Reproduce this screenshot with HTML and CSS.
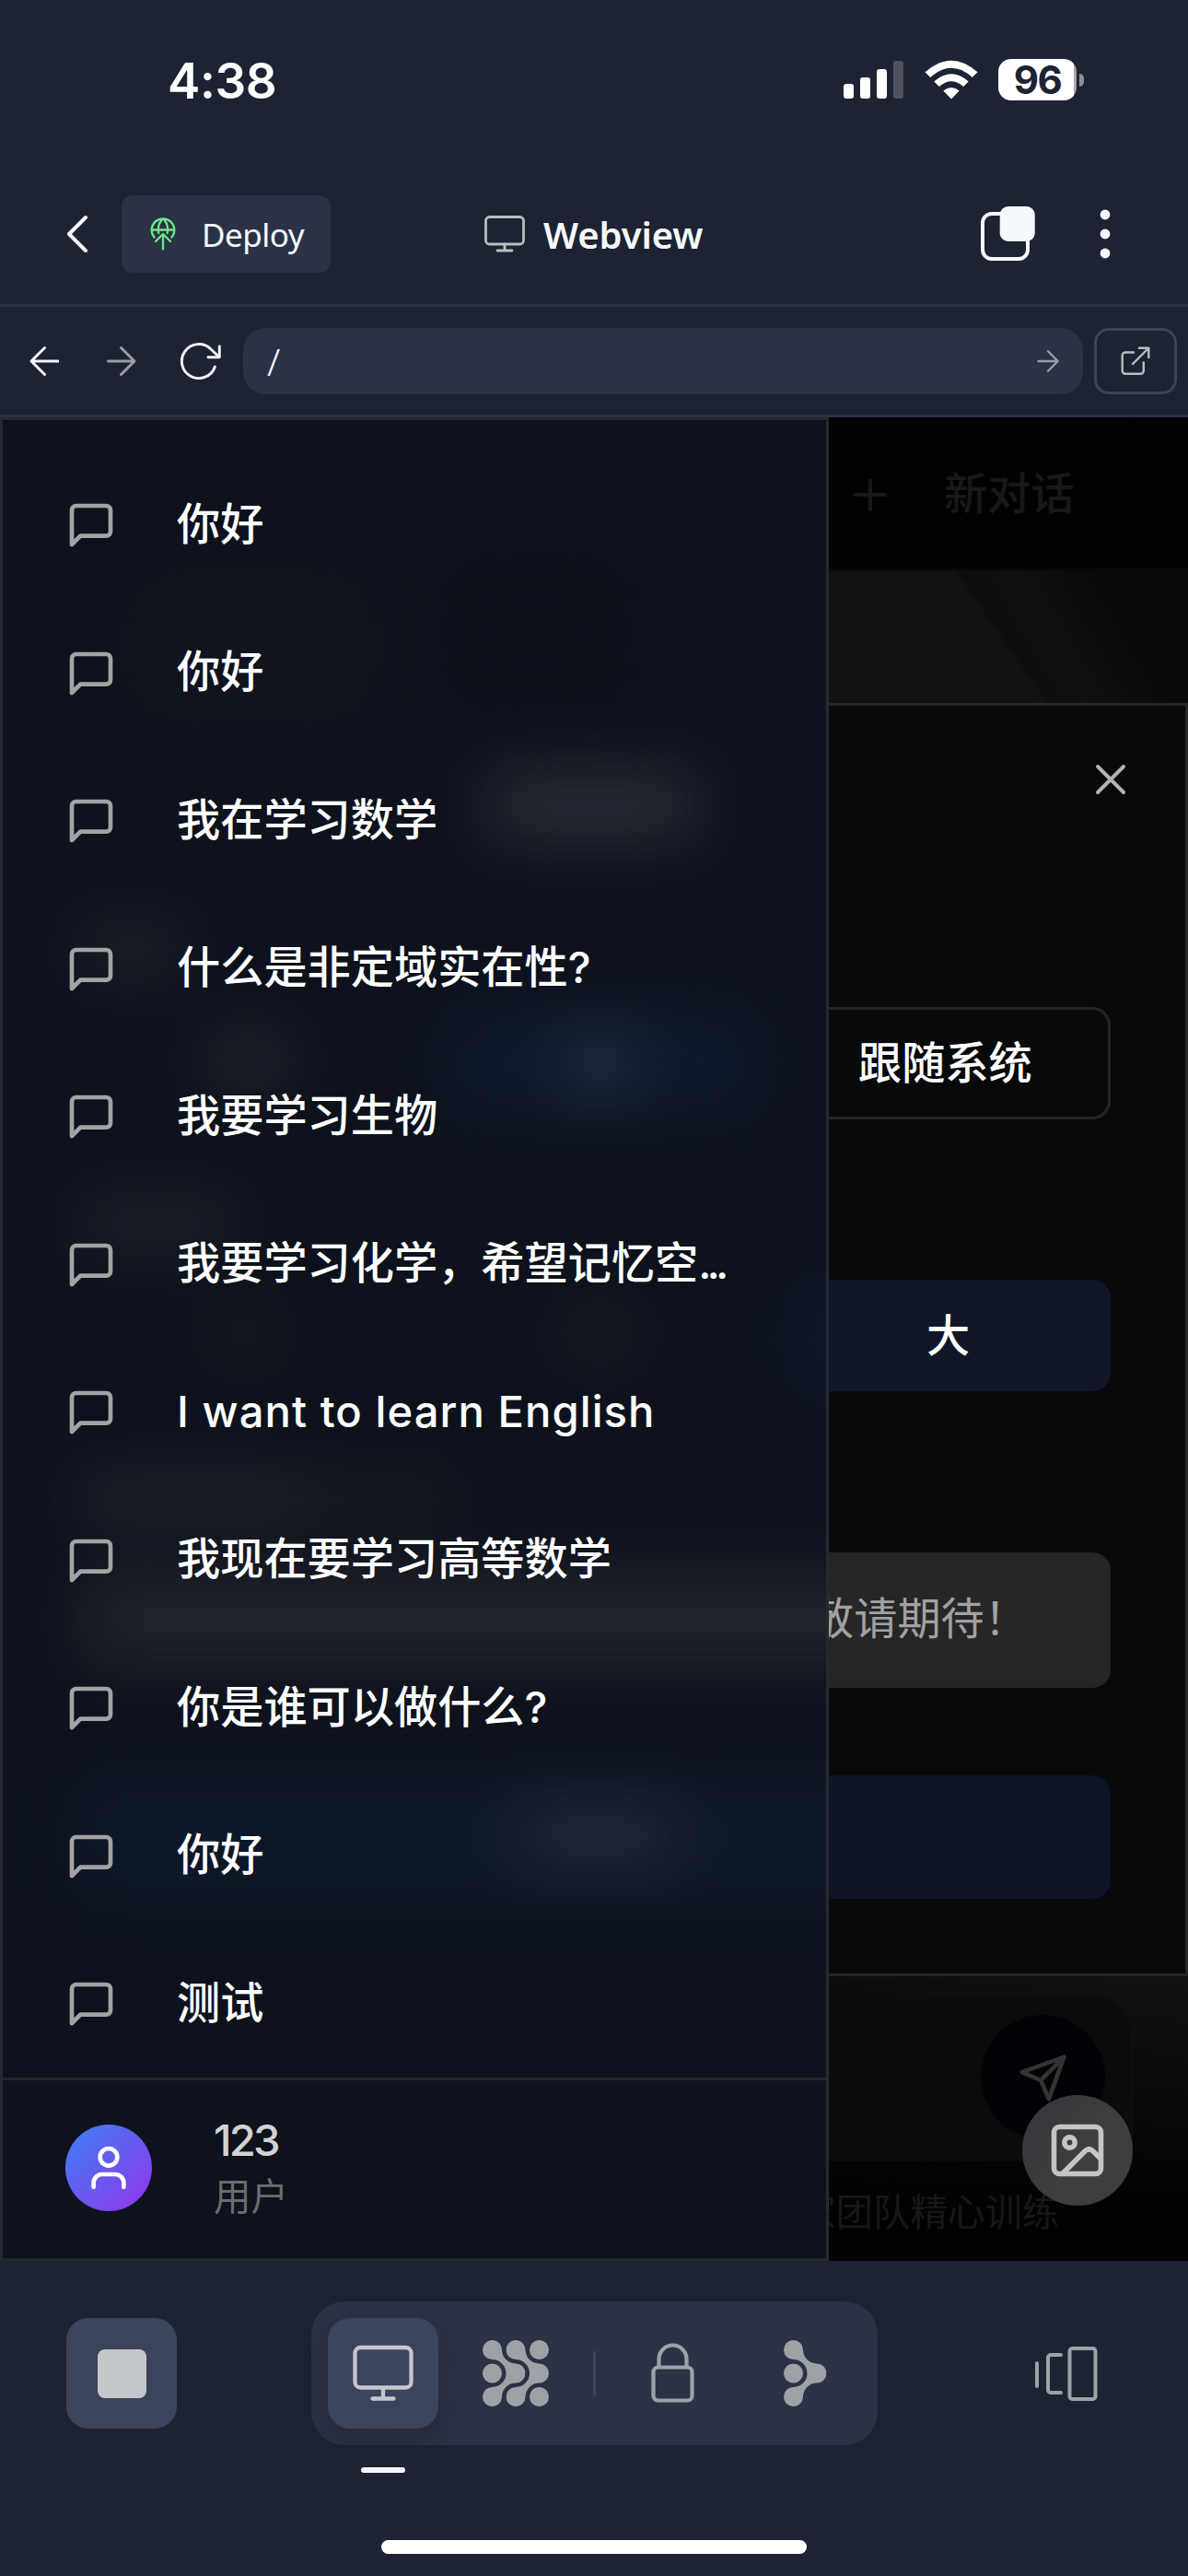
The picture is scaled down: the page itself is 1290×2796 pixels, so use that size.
FILE: index.html
```
<!DOCTYPE html>
<html lang="zh-CN">
<head>
<meta charset="utf-8">
<title>Webview</title>
<link rel="stylesheet" href="styles.css">
</head>
<body>
<svg class="defs" width="0" height="0" aria-hidden="true">
  <symbol id="chat" viewBox="0 0 24 24"><path d="M21 15a2 2 0 0 1-2 2H7l-4 4V5a2 2 0 0 1 2-2h14a2 2 0 0 1 2 2z" fill="none" stroke="currentColor" stroke-width="2" stroke-linecap="round" stroke-linejoin="round"/></symbol>
  <symbol id="branch" viewBox="0 0 46.5 72"><path d="M10.5 0A10.5 10.5 0 0 1 21 10.5A15 15 0 0 0 36 25.5A10.5 10.5 0 0 1 36 46.5A15 15 0 0 0 21 61.5A10.5 10.5 0 1 1 10.5 51A15 15 0 0 0 10.5 21A10.5 10.5 0 0 1 10.5 0Z" fill="currentColor"/></symbol>
</svg>

<div class="status">
  <span class="time">4:38</span>
  <div class="signals">
    <svg class="bars" width="65" height="42" viewBox="0 0 65 42" fill="#fff"><rect y="25" width="11" height="16" rx="3"/><rect x="18" y="18" width="11" height="23" rx="3"/><rect x="36" y="9" width="11" height="32" rx="3"/><rect x="54" width="11" height="41" rx="3" opacity=".22"/></svg>
    <svg class="wifi" width="58" height="43" viewBox="0 0 58 43" fill="#fff"><path d="M29 42.500L20.300 33.500Q29 26.500 37.700 33.500Z"/><path d="M15.800 29Q29 17.500 42.200 29L47.700 23.400Q29 7 10.300 23.400Z"/><path d="M6.200 19Q29-1.500 51.800 19L57.500 13.300Q29-12 .500 13.300Z"/></svg>
    <span class="battery">96</span><span class="nub"></span>
  </div>
</div>

<header class="header">
  <svg class="back" width="26" height="44" viewBox="0 0 26 44" fill="none" stroke="#f5f9fc" stroke-width="4" stroke-linecap="round" stroke-linejoin="round"><path d="M22 4L4 22L22 40"/></svg>
  <button class="deploy">
    <svg width="28" height="36" viewBox="0 0 28 36" fill="none" stroke="#6ee787" stroke-width="2.300" stroke-linecap="round" stroke-linejoin="round"><path d="M4.500 21.500A12.300 12.300 0 1 1 23.500 21.500M1.700 13.500H26.300M9.300 17Q7.500 7 14 1.300Q20.500 7 18.700 17M14 19V34.500M6 26L14 18L22 26"/></svg>
    <span>Deploy</span>
  </button>
  <div class="title">
    <svg width="44" height="40" viewBox="0 0 44 40" fill="none" stroke="#b8bdc1" stroke-width="2.800" stroke-linecap="round"><rect x="1.500" y="1.500" width="41" height="29.500" rx="4"/><path d="M22 31V38M14 38H30"/></svg>
    <span>Webview</span>
  </div>
  <svg class="tabs" width="60" height="60" viewBox="0 0 60 60"><rect x="2" y="8" width="49" height="49" rx="10" fill="none" stroke="#f5f9fc" stroke-width="4"/><rect x="20.700" y="0" width="38" height="38" rx="9" fill="#f5f9fc"/></svg>
  <svg class="dots" width="12" height="54" viewBox="0 0 12 54" fill="#f5f9fc"><circle cx="6" cy="6" r="5.400"/><circle cx="6" cy="27" r="5.400"/><circle cx="6" cy="48" r="5.400"/></svg>
</header>

<nav class="toolbar">
  <svg width="32" height="34" viewBox="0 0 32 34" fill="none" stroke="#f5f9fc" stroke-width="2.900" stroke-linecap="round" stroke-linejoin="round"><path d="M31 17H2M16.500 2.500L2 17L16.500 31.500"/></svg>
  <svg class="forward" width="32" height="34" viewBox="0 0 32 34" fill="none" stroke="#9a9ea4" stroke-width="2.900" stroke-linecap="round" stroke-linejoin="round"><path d="M1.500 17H30M15.500 2.500L30 17L15.500 31.500"/></svg>
  <svg class="reload" width="44" height="40" viewBox="0 0 44 40" fill="none" stroke="#f5f9fc" stroke-width="2.900" stroke-linecap="round" stroke-linejoin="round"><path d="M37.400 26A18.500 18.500 0 1 1 33 7L42 15.500M42.300 4V15.800H30"/></svg>
  <div class="address"><span>/</span><svg width="24" height="26" viewBox="0 0 24 26" fill="none" stroke="#9a9ea4" stroke-width="2.300" stroke-linecap="round" stroke-linejoin="round"><path d="M1.500 13H22.500M12 2.300L22.700 13L12 23.700"/></svg></div>
  <button class="open"><svg width="32" height="32" viewBox="0 0 32 32" fill="none" stroke="#b8bdc1" stroke-width="2.400" stroke-linecap="round" stroke-linejoin="round"><path d="M14 6.500H5A3.300 3.300 0 0 0 1.700 9.800V26.500A3.300 3.300 0 0 0 5 29.800H21.500A3.300 3.300 0 0 0 24.800 26.500V17.500M20 1.700H30.300V12M30 2L13 19"/></svg></button>
</nav>

<main class="webview">
  <aside class="sidebar">
    <ul class="history">
      <li><svg><use href="#chat"/></svg><span>你好</span></li>
      <li><svg><use href="#chat"/></svg><span>你好</span></li>
      <li><svg><use href="#chat"/></svg><span>我在学习数学</span></li>
      <li><svg><use href="#chat"/></svg><span>什么是非定域实在性?</span></li>
      <li><svg><use href="#chat"/></svg><span>我要学习生物</span></li>
      <li><svg><use href="#chat"/></svg><span>我要学习化学，希望记忆空<i class="dots3">...</i></span></li>
      <li><svg><use href="#chat"/></svg><span class="latin">I want to learn English</span></li>
      <li><svg><use href="#chat"/></svg><span>我现在要学习高等数学</span></li>
      <li><svg><use href="#chat"/></svg><span>你是谁可以做什么?</span></li>
      <li><svg><use href="#chat"/></svg><span>你好</span></li>
      <li><svg><use href="#chat"/></svg><span>测试</span></li>
    </ul>
    <div class="account">
      <div class="avatar"><svg width="56" height="56" viewBox="0 0 24 24" fill="none" stroke="#fff" stroke-width="2" stroke-linecap="round" stroke-linejoin="round"><path d="M19 21v-2a4 4 0 0 0-4-4H9a4 4 0 0 0-4 4v2"/><circle cx="12" cy="7" r="4"/></svg></div>
      <div class="who"><b>123</b><small>用户</small></div>
    </div>
  </aside>

  <section class="page">
    <div class="newchat">
      <svg width="36" height="36" viewBox="0 0 36 36" stroke="currentColor" stroke-width="4" stroke-linecap="round"><path d="M2 18H34M18 2V34"/></svg>
      <span>新对话</span>
    </div>
    <div class="hero"></div>
    <div class="dialog">
      <svg class="close" width="34" height="34" viewBox="0 0 34 34" stroke="#b2b2b3" stroke-width="4" stroke-linecap="round"><path d="M3 3L31 31M31 3L3 31"/></svg>
      <div class="option outline">跟随系统</div>
      <div class="option blue">大</div>
      <div class="option muted"><span>敬请期待！</span></div>
      <div class="option save"></div>
    </div>
    <div class="composer">
      <div class="inputbox">
        <div class="send"><svg width="56" height="56" viewBox="0 0 24 24" fill="none" stroke="#333" stroke-width="2" stroke-linecap="round" stroke-linejoin="round"><path d="M21.600 2.400L14.500 22L10.800 13.200L2 9.500ZM21.600 2.400L10.800 13.200"/></svg></div>
      </div>
      <div class="credit">家团队精心训练</div>
    </div>
    <button class="fab"><svg width="58" height="58" viewBox="0 0 58 58" fill="none" stroke="#c5c5c5" stroke-width="5.600" stroke-linecap="round" stroke-linejoin="round"><rect x="3.500" y="3.500" width="51" height="51" rx="6"/><circle cx="20.500" cy="20.500" r="5.700"/><path d="M54 38L45.500 29.500Q41.500 26 37.500 29.500L13 54"/></svg></button>
  </section>
</main>

<footer class="bottom">
  <div class="controls">
    <button class="tile stop"><i></i></button>
    <div class="dock">
      <button class="tile active"><svg width="66" height="62" viewBox="0 0 66 62" fill="none" stroke="#c2c8cc" stroke-width="4.300" stroke-linecap="round"><rect x="2.500" y="3" width="61" height="43.500" rx="6"/><path d="M33 47V58M21.500 58.500H44.500"/></svg></button>
      <svg class="mesh" width="72" height="72" viewBox="0 0 72 72"><use href="#branch" width="46.500" height="72"/><use href="#branch" x="25.500" width="46.500" height="72"/><g fill="currentColor"><circle cx="61.500" cy="10.500" r="10.500"/><circle cx="10.500" cy="36" r="10.500"/><circle cx="61.500" cy="61.500" r="10.500"/></g></svg>
      <i class="rule"></i>
      <svg class="lock" width="48" height="66" viewBox="0 0 48 66" fill="none" stroke="currentColor" stroke-width="4.200"><rect x="2.500" y="26.500" width="42" height="36" rx="5"/><path d="M8.500 26V17.500A15 15 0 0 1 38.500 17.500V26"/></svg>
      <svg class="agent" width="46.500" height="72" viewBox="0 0 46.500 72"><use href="#branch" width="46.500" height="72"/><circle cx="10.500" cy="36" r="10.500" fill="currentColor"/></svg>
    </div>
    <svg class="panes" width="70" height="60" viewBox="0 0 70 60" fill="none" stroke="currentColor" stroke-width="4" stroke-linecap="round"><path d="M3 19V44M29 10H18A3 3 0 0 0 15 13V48A3 3 0 0 0 18 51H29"/><rect x="38.500" y="3" width="28" height="55" rx="3"/></svg>
  </div>
  <i class="indicator"></i>
  <i class="home"></i>
</footer>
</body>
</html>
```
FILE: styles.css
```
* { box-sizing: border-box; }
body {
  margin: 0;
  width: 1290px;
  height: 2796px;
  overflow: hidden;
  display: flex;
  flex-direction: column;
  background: #1d2332;
  color: #fff;
  font-family: "Inter", "Noto Sans CJK SC", sans-serif;
}
svg { display: block; flex: none; }
button { border: 0; padding: 0; color: inherit; font: inherit; }
.defs { position: absolute; }

.status {
  height: 177px;
  padding: 59px 113px 0 182px;
  display: flex;
  justify-content: space-between;
  align-items: flex-start;
}
.time { font-size: 53px; line-height: 58px; font-weight: 600; letter-spacing: -0.4px; }
.signals { display: flex; align-items: center; height: 55px; }
.bars { margin-right: 1px; }
.wifi { margin: 0 22px; overflow: visible; }
.battery {
  width: 85px;
  height: 45px;
  border-radius: 14px;
  background: linear-gradient(90deg, #fff 82px, #a4a7ad 82px);
  color: #1d2332;
  font-size: 42px;
  font-weight: 650;
  line-height: 46px;
  text-align: center;
  letter-spacing: -1.5px;
}
.nub { width: 5px; height: 14px; margin-left: 3px; border-radius: 0 5px 5px 0; background: #8e9199; }

.header {
  height: 156px;
  padding-top: 1px;
  border-bottom: 3px solid #2b3245;
  display: flex;
  align-items: center;
  padding-left: 71px;
}
.deploy {
  width: 227px;
  height: 84px;
  margin-left: 35px;
  border-radius: 12px;
  background: #2b3245;
  color: #f5f9fc;
  display: flex;
  align-items: center;
  padding-left: 31px;
  gap: 28px;
  font: 400 35px "Noto Sans", sans-serif;
  letter-spacing: -0.5px;
}
.title {
  display: flex;
  align-items: center;
  gap: 20px;
  width: 300px;
  margin-left: 167px;
  color: #f5f9fc;
  font: 600 40px "Noto Sans", sans-serif;
  letter-spacing: -0.1px;
}
.tabs { margin-left: 239px; }
.dots { margin-left: 69px; }

.toolbar {
  height: 120px;
  padding: 0 12px 0 32px;
  border-bottom: 3px solid #2b3245;
  display: flex;
  align-items: center;
}
.forward { margin-left: 52px; }
.reload { margin-left: 48px; }
.address {
  width: 912px;
  height: 72px;
  margin-left: 24px;
  padding: 0 26px;
  border-radius: 24px;
  background: #2b3245;
  display: flex;
  align-items: center;
  justify-content: space-between;
  color: #f5f9fc;
  font: 300 41px "Noto Sans", sans-serif;
}
.open {
  width: 90px;
  height: 72px;
  margin-left: 12px;
  border: 3px solid #3c445c;
  border-radius: 16px;
  background: none;
  display: flex;
  align-items: center;
  justify-content: center;
}

.webview {
  height: 2001px;
  display: grid;
  grid-template-columns: 900px 390px;
  background: #030303;
}
.sidebar {
  position: relative;
  overflow: hidden;
  border: 3px solid #252a32;
  background: #0d121c;
  display: flex;
  flex-direction: column;
}
/* blurred shapes of the page seen through the glass panel */
.sidebar::before {
  content: "";
  position: absolute;
  inset: 0 -80px 0 0;
  filter: blur(32px);
  background:
    linear-gradient(#2c2f38, #2c2f38) 530px 385px / 220px 66px no-repeat,
    linear-gradient(#1c1f28, #1c1f28) 85px 545px / 110px 60px no-repeat,
    linear-gradient(#22242d, #22242d) 225px 665px / 85px 60px no-repeat,
    linear-gradient(#263144, #263144) 610px 668px / 75px 60px no-repeat,
    linear-gradient(#0e182b, #0e182b) 480px 638px / 340px 118px no-repeat,
    linear-gradient(#1d2029, #1d2029) 85px 845px / 165px 55px no-repeat,
    linear-gradient(#161921, #161921) 225px 960px / 75px 60px no-repeat,
    linear-gradient(#191c24, #191c24) 610px 960px / 75px 60px no-repeat,
    linear-gradient(#0e172b, #0e172b) 860px 935px / 120px 120px no-repeat,
    linear-gradient(#1f222b, #1f222b) 85px 1145px / 240px 52px no-repeat,
    linear-gradient(#171a22, #171a22) 325px 1145px / 160px 52px no-repeat,
    linear-gradient(#22252d, #22252d) 90px 1255px / 900px 92px no-repeat,
    linear-gradient(#242839, #242839) 560px 1502px / 170px 68px no-repeat,
    linear-gradient(#0e1829, #0e1829) 80px 1475px / 900px 130px no-repeat,
    linear-gradient(#10151d, #10151d) 140px 170px / 260px 150px no-repeat,
    linear-gradient(#0b1019, #0b1019) 480px 150px / 200px 160px no-repeat;
}
.history {
  position: relative;
  margin: 0;
  padding: 34px 0 0;
  list-style: none;
  height: 1799px;
}
.history li {
  height: 160.5px;
  padding-left: 68px;
  display: flex;
  align-items: center;
  gap: 65px;
  font-size: 47.2px;
  font-weight: 500;
  line-height: 60px;
  white-space: nowrap;
}
.history svg { width: 56px; height: 56px; color: #a3a3a3; }
.history span { position: relative; top: -1.5px; }
.dots3 { font-style: normal; letter-spacing: -5px; }
.history .latin { letter-spacing: 1.05px; }
.account {
  position: relative;
  flex: 1;
  border-top: 3px solid #25272b;
  padding: 0 0 3px 68px;
  display: flex;
  align-items: center;
  gap: 67px;
}
.avatar {
  width: 94px;
  height: 94px;
  border-radius: 50%;
  background: linear-gradient(135deg, #3b82f6, #9333ea);
  display: flex;
  align-items: center;
  justify-content: center;
}
.who { display: flex; flex-direction: column; }
.who b { font-size: 47.2px; line-height: 64px; font-weight: 500; letter-spacing: -2.8px; color: #d2d2d3; }
.who small { font-size: 40.5px; line-height: 60px; color: #6b6c6d; }

.page { position: relative; overflow: hidden; display: flex; flex-direction: column; }
.newchat {
  height: 164px;
  width: 349px;
  padding: 4px 0 0 27px;
  border-radius: 0 20px 20px 0;
  background: #020202;
  display: flex;
  align-items: center;
  gap: 62px;
  color: #181818;
  font-size: 47.2px;
  font-weight: 500;
}
.newchat span { position: relative; top: -5px; }
.hero {
  height: 146px;
  border-top: 3px solid #090909;
  background: linear-gradient(60deg, transparent 42%, #0e110f 60%, #08090a 80%), linear-gradient(235deg, #0a0c0c 51%, #121211 52%);
}
.dialog {
  height: 1382px;
  border: solid #262626;
  border-width: 3px 3px 3px 0;
  background: #08090a;
  display: flex;
  flex-direction: column;
}
.close { margin: 63px 0 0 289px; }
.option {
  width: 306px;
  border-radius: 0 20px 20px 0;
  display: flex;
  align-items: center;
  font-size: 47.2px;
  font-weight: 500;
}
.outline { height: 122px; margin-top: 230px; border: 3px solid #242426; border-left: 0; padding: 0 0 7px 32px; }
.blue { height: 121px; margin-top: 174px; padding: 0 0 7px 106px; background: #101627; }
.muted { height: 147px; margin-top: 175px; background: #262626; color: #a1a1a1; font-weight: 400; overflow: hidden; }
.muted span { margin-left: -20px; white-space: nowrap; position: relative; top: -5px; }
.save { height: 134px; margin-top: 95px; background: #0d1426; }
.composer {
  flex: 1;
  padding-top: 21px;
  background: linear-gradient(180deg, #10101000 0, #020202 85%), linear-gradient(100deg, #0c0c0c, #131210);
}
.inputbox {
  width: 330px;
  height: 179px;
  border-radius: 0 40px 0 0;
  border: solid #111;
  border-width: 1px 1px 1px 0;
  padding: 20px 0 0 165px;
  background: #0b0b0b;
}
.send {
  width: 135px;
  height: 135px;
  border-radius: 50%;
  background: #020307;
  display: flex;
  align-items: center;
  justify-content: center;
}
.credit { margin: 27px 0 0 -33px; font-size: 40.5px; line-height: 60px; white-space: nowrap; color: #171717; }
.fab {
  position: absolute;
  left: 210px;
  top: 1821px;
  width: 120px;
  height: 120px;
  border-radius: 50%;
  background: linear-gradient(120deg, #38393c 25%, #3e3e3e 55%);
  display: flex;
  align-items: center;
  justify-content: center;
}

.bottom { height: 342px; padding-top: 44px; display: flex; flex-direction: column; color: #9da2a6; }
.controls { height: 156px; padding-left: 72px; display: flex; align-items: center; }
.tile {
  width: 120px;
  height: 120px;
  border-radius: 24px;
  background: #3c445c;
  display: flex;
  align-items: center;
  justify-content: center;
}
.stop i { width: 53px; height: 53px; border-radius: 8px; background: #c2c8cc; }
.dock {
  width: 615px;
  height: 156px;
  margin-left: 146px;
  padding-left: 18px;
  border-radius: 36px;
  background: #2b3245;
  display: flex;
  align-items: center;
}
.active { box-shadow: 0 12px 24px rgba(20, 20, 35, 0.28); }
.mesh { margin-left: 48px; }
.rule { width: 3px; height: 48px; margin-left: 48px; background: #3c445c; }
.lock { margin-left: 60px; }
.agent { margin-left: 96px; }
.panes { margin-left: 170px; }
.indicator { width: 48px; height: 6px; margin: 24px 0 0 392px; border-radius: 3px; background: #f5f9fc; }
.home { width: 462px; height: 15px; margin: 73px auto 0; border-radius: 8px; background: #fff; }
```
